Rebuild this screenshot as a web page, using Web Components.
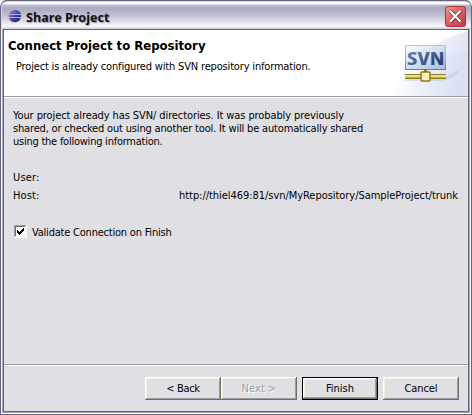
<!DOCTYPE html>
<html lang="en"><head><meta charset="utf-8"><title>Share Project</title>
<style>
html,body{margin:0;width:472px;height:415px;overflow:hidden;background:#fff}
body{font:11px/13px "DejaVu Sans Condensed","DejaVu Sans",sans-serif;font-stretch:condensed;color:#000}
</style></head><body>
<share-dialog></share-dialog>
<script>
const define=(name,html,setup)=>customElements.define(name,class extends HTMLElement{
  connectedCallback(){
    if(this.shadowRoot)return;
    const t=document.createElement('template');t.innerHTML=html;
    this.attachShadow({mode:'open'}).append(t.content.cloneNode(true));
    if(setup)setup(this,this.shadowRoot);
  }
});

// One line of text, spaced out to the width given in its "w" attribute.
define('fit-text','<style>:host{display:block;white-space:nowrap}span{display:inline-block}</style><span></span>',(el,root)=>{
  const s=root.querySelector('span');s.textContent=el.getAttribute('text');
  const w=+el.getAttribute('w'),n=s.textContent.length;
  s.style.letterSpacing=((w-s.getBoundingClientRect().width)/n)+'px';
});

define('eclipse-icon',`<style>:host{display:block;width:16px;height:16px}svg{display:block}</style>
<svg width="16" height="16"><defs><linearGradient id="g" x1="0" y1="0" x2="1" y2="1"><stop offset="0" stop-color="#9a92dc"/><stop offset=".5" stop-color="#45459f"/><stop offset="1" stop-color="#1c1c66"/></linearGradient></defs>
<circle cx="7" cy="8" r="6.6" fill="#e3a6cc"/><circle cx="8" cy="8" r="6.2" fill="url(#g)"/>
<path d="M2 6.5h12M2 9.5h12" stroke="#a9b6ee" stroke-width="1"/></svg>`);

define('close-button',`<style>:host{display:block;width:21px;height:21px}svg{display:block}</style>
<svg width="21" height="21"><defs><linearGradient id="r" x1="0" y1="0" x2="1" y2="1"><stop offset="0" stop-color="#e89a98"/><stop offset=".5" stop-color="#d85f5f"/><stop offset="1" stop-color="#b83c42"/></linearGradient></defs>
<rect x=".5" y=".5" width="20" height="20" rx="2" fill="url(#r)" stroke="#a8343c"/>
<path d="M5.5 5l10 11M15.5 5l-10 11" stroke="#7e2c38" stroke-width="3.6"/><path d="M5 4.8l10.5 11M15.5 4.8l-10.5 11" stroke="#fff" stroke-width="2.2"/></svg>`);

define('title-bar',`<style>
:host{display:flex;box-sizing:border-box;height:29px;padding:6px 6px 0 7px;background:linear-gradient(#65647e 0 1px,#9a99b2 1px 2px,#fff 2px 4px,#e5e5ee 4px,#b2b2c8 6px,#acacc3 9px,#c0c0d2 15px,#e2e2ea 22px,#fbfbfd 26px,#dcdce4 28px,#c6c6d2 29px)}
eclipse-icon{margin-top:2px}
fit-text{flex:1;margin:3px 0 0 3px;font:bold 12.6px/17px "Noto Sans","Open Sans",sans-serif;font-stretch:normal;color:#101014;text-shadow:1px 1px 1px #9c9cb0}
</style><eclipse-icon></eclipse-icon><fit-text text="Share Project" w="83.5"></fit-text><close-button></close-button>`);

define('svn-banner',`<style>:host{display:block;width:75px;height:66px}svg{display:block}</style>
<svg width="75" height="66"><defs>
<linearGradient id="a" x1="0" y1="0" x2="1" y2=".2"><stop offset="0" stop-color="#fff"/><stop offset=".4" stop-color="#f8f9fe"/><stop offset="1" stop-color="#dfe5f5"/></linearGradient>
<linearGradient id="c" x1="0" y1="0" x2="1" y2="0"><stop offset="0" stop-color="#e8ecf8" stop-opacity=".2"/><stop offset="1" stop-color="#d3dcf1" stop-opacity=".6"/></linearGradient>
<linearGradient id="b" x1="0" y1="0" x2="1" y2="1"><stop offset="0" stop-color="#fff"/><stop offset="1" stop-color="#a9bde0"/></linearGradient>
<linearGradient id="f" x1="0" y1="0" x2="0" y2="1"><stop offset="0" stop-color="#e4bd88"/><stop offset=".6" stop-color="#a9a48e"/><stop offset="1" stop-color="#5f8190"/></linearGradient>
<linearGradient id="t" x1="0" y1="0" x2="1" y2="1"><stop offset="0" stop-color="#6f8cbc"/><stop offset="1" stop-color="#16305f"/></linearGradient>
<linearGradient id="s" x1="0" y1="0" x2="1" y2="0"><stop offset="0" stop-color="#c9c9df" stop-opacity=".5"/><stop offset="1" stop-color="#c3c5df" stop-opacity=".6"/></linearGradient></defs>
<path d="M0 66C8 36 36 12 75 1V66Z" fill="url(#a)"/><path d="M10 66C22 42 46 24 75 22V66Z" fill="url(#c)"/>
<path d="M11 51L20 46L54 46L68 39Q60 50 48 51Z" fill="url(#s)"/>
<rect x="12.5" y="15.5" width="40" height="24" fill="url(#b)" stroke="url(#f)"/>
<text x="14" y="35.4" textLength="37.5" lengthAdjust="spacingAndGlyphs" font-family="Open Sans" font-weight="bold" font-size="18.6" fill="url(#t)">SVN</text>
<path d="M12 46.5H53" stroke="#8e7f20" stroke-width="5"/><path d="M12 46.2H53" stroke="#ecdf8c" stroke-width="2.4"/>
<path d="M32.5 39v4" stroke="#8a7a18" stroke-width="3"/><rect x="28" y="42" width="9" height="9" rx="1" fill="#f8efbc" stroke="#8a7a18" stroke-width="1.5"/></svg>`);

define('wizard-header',`<style>
:host{display:flex;height:66px;background:#fff;border-bottom:1px solid #9b99a8;box-shadow:0 1px #fff}
div{flex:1;padding:8px 0 0 4px}
.h{font-weight:bold;font-size:13px;line-height:16px}
.s{margin:6px 0 0 8px}
</style><div><fit-text class="h" text="Connect Project to Repository" w="197.5"></fit-text>
<fit-text class="s" text="Project is already configured with SVN repository information." w="294.5"></fit-text></div><svn-banner></svn-banner>`);

define('check-box',`<style>:host{display:flex;gap:5px}
svg{display:block}fit-text{margin-top:1px}</style>
<svg width="13" height="13" shape-rendering="crispEdges"><path fill="#fff" d="M0 0h13v13H0z"/><path d="M0 .5H12M.5 0V12" fill="none" stroke="#9d9ba8"/><path d="M1.5 11V1.5H11" fill="none" stroke="#716f64"/><path d="M1 11.5h10.5V1" fill="none" stroke="#f1efe2"/>
<path d="M3 5h1v1h1v1h1v-1h1v-1h1v-1h1v-1h1v3h-1v1h-1v1h-1v1h-1v1h-1v-1h-1v-1h-1z"/></svg>
<fit-text text="Validate Connection on Finish" w="139.5"></fit-text>`);

define('push-button',`<style>
:host{display:flex;justify-content:center;box-sizing:border-box;width:76px;height:23px;padding-top:5px;background:#e0dfe3;box-shadow:inset -1px -1px #716f64,inset 1px 1px #fff,inset -2px -2px #9d9da1,inset 2px 2px #f1efe2}
:host([disabled]){color:#9d9da1;text-shadow:1px 1px #fff}
:host([primary]){box-shadow:inset 0 0 0 1px #000,inset -2px -2px #716f64,inset 2px 2px #fff,inset -3px -3px #9d9da1,inset 3px 3px #f1efe2}
</style><slot></slot>`);

define('wizard-body',`<style>
:host{display:block;box-sizing:border-box;height:267px;padding:12px 10px 0 9px}
.u{margin-top:23px}.row{display:flex;justify-content:space-between;margin-top:5px}
check-box{margin:23px 0 0 1px}
</style><fit-text text="Your project already has SVN/ directories. It was probably previously" w="331"></fit-text>
<fit-text text="shared, or checked out using another tool. It will be automatically shared" w="350"></fit-text>
<fit-text text="using the following information." w="149.5"></fit-text>
<fit-text class="u" text="User:" w="26.5"></fit-text>
<div class="row"><fit-text text="Host:" w="26.5"></fit-text><fit-text text="http://thiel469:81/svn/MyRepository/SampleProject/trunk" w="279"></fit-text></div>
<check-box></check-box>`);

define('wizard-footer',`<style>
:host{display:flex;justify-content:flex-end;box-sizing:border-box;height:47px;padding:12px 9px 0;border-top:1px solid #9d9ba8;box-shadow:inset 0 1px #fff}
.g{display:flex}push-button.p{margin:0 5px}
</style><div class="g"><push-button><fit-text text="&lt; Back" w="33.5"></fit-text></push-button><push-button disabled><fit-text text="Next &gt;" w="35"></fit-text></push-button></div>
<push-button class="p" primary><fit-text text="Finish" w="28"></fit-text></push-button><push-button><fit-text text="Cancel" w="33"></fit-text></push-button>`);

define('share-dialog',`<style>
:host{display:block;position:relative;width:472px;height:415px;border-radius:7px 7px 0 0;overflow:hidden;background:#e0dfe3}
.frame{box-sizing:border-box;height:386px;border:1px solid #65647e;border-top:0;background:#a4a3b7;padding:0 2px 2px;box-shadow:inset 1px 0 #fff,inset -1px -1px #fff}
.in{box-sizing:border-box;height:383px;border:1px solid #65647e;background:#e0dfe3}
.edge{position:absolute;inset:0;border:1px solid #65647e;border-radius:7px 7px 0 0;box-shadow:inset 1px 1px #d8d8e4;height:28px;border-bottom:0}
</style><title-bar></title-bar><div class="frame"><div class="in"><wizard-header></wizard-header><wizard-body></wizard-body><wizard-footer></wizard-footer></div></div><div class="edge"></div>`);
</script></body></html>
